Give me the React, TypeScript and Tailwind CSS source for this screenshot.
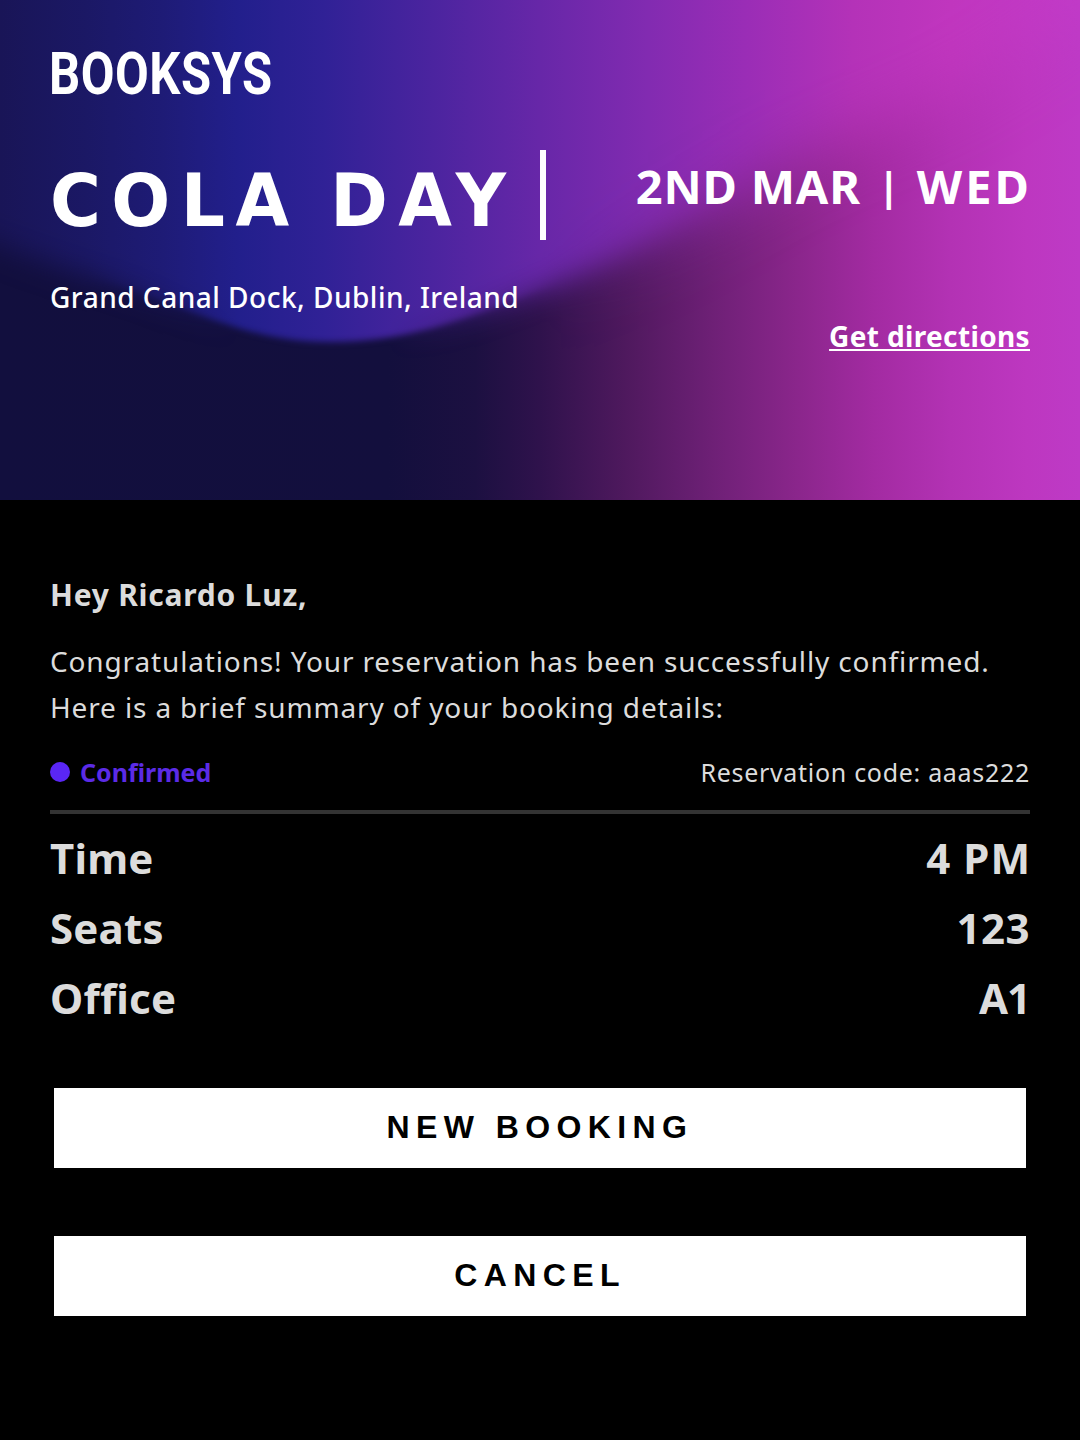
const details = [
  { label: "Time", value: "4 PM", spacing: "tracking-[1px] -mr-px" },
  { label: "Seats", value: "123", spacing: "tracking-[0.5px]" },
  { label: "Office", value: "A1", spacing: "tracking-[-1px]" },
];

function HeroBackdrop() {
  const wave =
    "M-80 -80 L-80 215 C-20 238 40 262 100 280 C180 302 240 342 330 342 C420 342 480 312 550 287 C640 254 700 216 780 172 C860 130 950 105 1010 60 C1080 20 1120 -20 1160 -80 Z";
  return (
    <svg className="absolute inset-0 h-full w-full" viewBox="0 0 1080 500" preserveAspectRatio="none" aria-hidden="true">
      <defs>
        <linearGradient id="lower" gradientUnits="userSpaceOnUse" x1="0" y1="0" x2="1080" y2="0">
          <stop offset="0" stopColor="#120f3e" />
          <stop offset="0.36" stopColor="#130f3d" />
          <stop offset="0.44" stopColor="#1c1041" />
          <stop offset="0.5" stopColor="#2f124c" />
          <stop offset="0.58" stopColor="#4f195e" />
          <stop offset="0.66" stopColor="#6e2076" />
          <stop offset="0.74" stopColor="#8b268c" />
          <stop offset="0.81" stopColor="#a32ba2" />
          <stop offset="0.88" stopColor="#b332b4" />
          <stop offset="0.95" stopColor="#bd37c0" />
          <stop offset="1" stopColor="#be3ac6" />
        </linearGradient>
        <linearGradient id="upper" gradientUnits="userSpaceOnUse" x1="0" y1="0" x2="1080" y2="0">
          <stop offset="0" stopColor="#191557" />
          <stop offset="0.08" stopColor="#1b1865" />
          <stop offset="0.15" stopColor="#1e1b76" />
          <stop offset="0.22" stopColor="#221f8c" />
          <stop offset="0.3" stopColor="#302196" />
          <stop offset="0.4" stopColor="#4b249f" />
          <stop offset="0.5" stopColor="#6727a8" />
          <stop offset="0.6" stopColor="#822bb1" />
          <stop offset="0.69" stopColor="#9a2db6" />
          <stop offset="0.79" stopColor="#b432b8" />
          <stop offset="0.88" stopColor="#c036be" />
          <stop offset="1" stopColor="#c23bc8" />
        </linearGradient>
        <linearGradient id="crisp" gradientUnits="userSpaceOnUse" x1="0" y1="0" x2="1080" y2="0">
          <stop offset="0.08" stopColor="#fff" stopOpacity="0" />
          <stop offset="0.22" stopColor="#fff" />
          <stop offset="0.36" stopColor="#fff" />
          <stop offset="0.52" stopColor="#fff" stopOpacity="0" />
        </linearGradient>
        <linearGradient id="rightFade" gradientUnits="userSpaceOnUse" x1="0" y1="0" x2="1080" y2="0">
          <stop offset="0.5" stopColor="#fff" stopOpacity="0" />
          <stop offset="0.7" stopColor="#fff" />
        </linearGradient>
        <filter id="soft" x="-20%" y="-20%" width="140%" height="140%">
          <feGaussianBlur stdDeviation="14" />
        </filter>
        <filter id="softer" x="-20%" y="-20%" width="140%" height="140%">
          <feGaussianBlur stdDeviation="32" />
        </filter>
        <filter id="edge" x="-20%" y="-20%" width="140%" height="140%">
          <feGaussianBlur stdDeviation="3" />
        </filter>
        <mask id="mRight" maskUnits="userSpaceOnUse" x="0" y="0" width="1080" height="500">
          <rect width="1080" height="500" fill="url(#rightFade)" />
        </mask>
        <mask id="mCrisp" maskUnits="userSpaceOnUse" x="0" y="0" width="1080" height="500">
          <rect width="1080" height="500" fill="url(#crisp)" />
        </mask>
        <mask id="mWave" maskUnits="userSpaceOnUse" x="0" y="0" width="1080" height="500">
          <path d={wave} fill="#fff" filter="url(#soft)" />
          <g mask="url(#mRight)">
            <rect width="1080" height="500" fill="#000" />
            <path d={wave} fill="#fff" filter="url(#softer)" />
          </g>
          <g mask="url(#mCrisp)">
            <rect width="1080" height="500" fill="#000" />
            <path d={wave} fill="#fff" filter="url(#edge)" />
          </g>
        </mask>
      </defs>
      <rect width="1080" height="500" fill="url(#lower)" />
      <rect width="1080" height="500" fill="url(#upper)" mask="url(#mWave)" />
    </svg>
  );
}

function ActionButton({ children }: { children: string }) {
  return (
    <button className="flex h-20 w-full items-center justify-center bg-white pb-[3px] font-['Liberation_Sans',sans-serif] text-[32px] font-bold leading-none tracking-[6.4px] text-black">
      {children}
    </button>
  );
}

export default function App() {
  return (
    <main className="h-[1440px] w-[1080px] overflow-hidden bg-black font-['Noto_Sans',sans-serif] text-[#dcdcdc]">
      <header className="relative h-[500px] text-white">
        <HeroBackdrop />
        <div className="relative px-[50px] pt-11">
          <div className="-ml-px origin-left scale-x-[0.83] whitespace-nowrap font-['Roboto',sans-serif] text-[59px] font-bold leading-[60px] tracking-[0.6px]">
            BOOKSYS
          </div>
          <div className="mt-[46px] flex justify-between">
            <h1 className="h-[90px] w-[496px] border-r-[6px] border-white pt-1.5 font-['DejaVu_Sans',sans-serif] text-[73px] font-bold leading-[90px]">
              <span className="block origin-left scale-x-[0.95] whitespace-nowrap tracking-[11px] [word-spacing:-4px]">
                COLA DAY
              </span>
            </h1>
            <div className="flex h-[60px] items-baseline whitespace-nowrap pt-1.5 text-[47px] font-bold leading-[60px]">
              <span className="tracking-[0.8px]">2ND MAR</span>
              <span className="ml-[17px] mr-[17px] -translate-y-[3px] text-[40px]">|</span>
              <span className="-mr-0.5 tracking-[3px]">WED</span>
            </div>
          </div>
          <div className="mt-[37px] flex justify-between whitespace-nowrap text-[28px] leading-10">
            <p className="font-medium tracking-[0.5px]">Grand Canal Dock, Dublin, Ireland</p>
            <a className="mt-[39px] font-bold tracking-[0.36px] underline decoration-2 underline-offset-2">Get directions</a>
          </div>
        </div>
      </header>

      <section className="px-[50px] pt-[75px]">
        <h2 className="text-[30px] font-bold leading-10 tracking-[0.75px]">Hey Ricardo Luz,</h2>
        <p className="mt-[23px] whitespace-nowrap text-[28px] leading-[46px] tracking-[0.86px]">
          Congratulations! Your reservation has been successfully confirmed.
          <br />
          Here is a brief summary of your booking details:
        </p>
        <div className="mt-6 flex h-14 justify-between text-[25px] leading-9">
          <div className="flex gap-2.5 font-bold text-[#5b2be6]">
            <span className="mt-2 size-5 rounded-full bg-[#5a26f5]" />
            <span>Confirmed</span>
          </div>
          <span className="tracking-[0.7px]">Reservation code: aaas222</span>
        </div>
        <hr className="border-0 border-t-4 border-[#333333]" />
        <dl className="mt-[9px] text-[42px] font-bold leading-[70px]">
          {details.map((d) => (
            <div key={d.label} className="flex justify-between">
              <dt className="tracking-[0.2px]">{d.label}</dt>
              <dd className={d.spacing}>{d.value}</dd>
            </div>
          ))}
        </dl>
        <div className="mt-[55px] flex flex-col gap-[68px] px-1">
          <ActionButton>NEW BOOKING</ActionButton>
          <ActionButton>CANCEL</ActionButton>
        </div>
      </section>
    </main>
  );
}
